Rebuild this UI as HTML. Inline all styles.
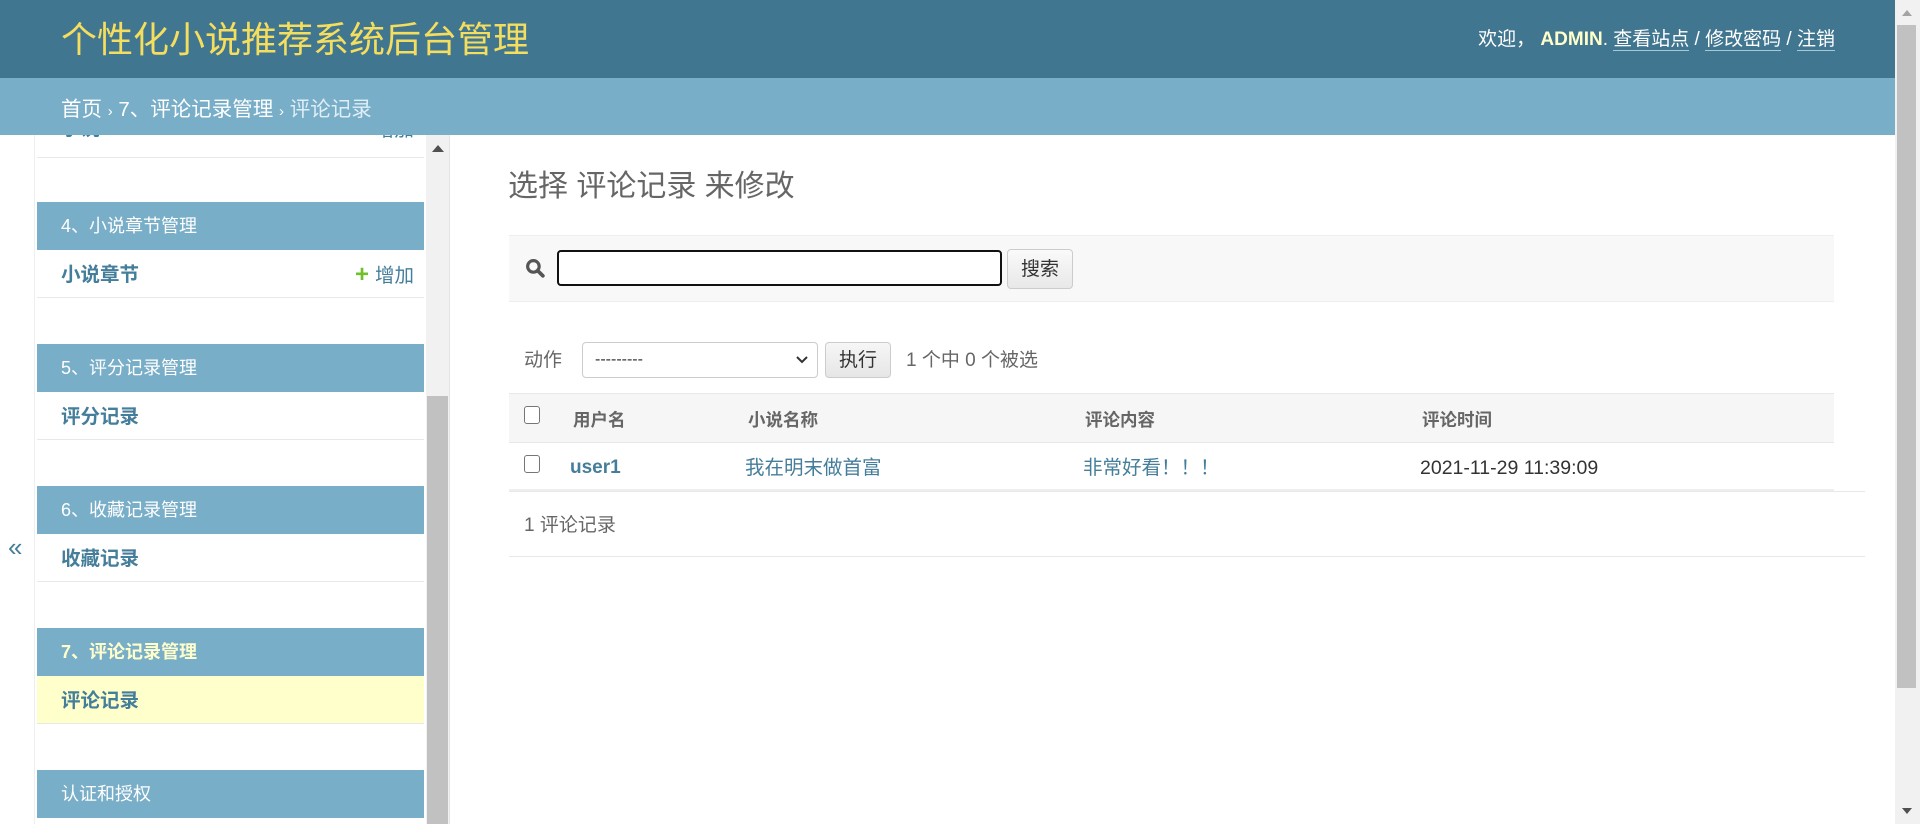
<!DOCTYPE html>
<html><head><meta charset="utf-8"><style>
*{box-sizing:border-box;margin:0;padding:0}
body{width:1920px;height:824px;overflow:hidden;background:#fff;font-family:"Liberation Sans","Noto Sans CJK SC",sans-serif;color:#333;position:relative}
.a{position:absolute;white-space:nowrap}
.t{position:absolute;white-space:nowrap;height:30px;line-height:30px}
.cap{position:absolute;left:37px;width:387px;height:48px;background:#79aec8;color:#fff;font-size:18px;line-height:48px;padding-left:24px}
.row{position:absolute;left:37px;width:387px;height:48px;border-bottom:1px solid #e8e8e8;font-size:19.5px;font-weight:bold;color:#447e9b;line-height:50px;padding-left:24px}
.add{position:absolute;right:10px;top:0;font-weight:normal;color:#447e9b}
.add b{color:#70bf2b;font-size:24px;margin-right:6px}
.cb{position:absolute;width:16px;height:18px;border:1px solid #767676;border-radius:3px;background:#fff}
</style></head><body>
<div class="a" style="left:0;top:0;width:1895px;height:78px;background:#417690"></div>
<div class="t" style="left:61px;top:20px;height:40px;line-height:40px;font-size:36px;color:#f5dd5d">个性化小说推荐系统后台管理</div>
<div class="t" style="right:85px;top:25px;font-size:19px;color:#fff">欢迎， <b style="color:#ffc">ADMIN</b>. <span style="border-bottom:1px solid #aac5d3">查看站点</span> / <span style="border-bottom:1px solid #aac5d3">修改密码</span> / <span style="border-bottom:1px solid #aac5d3">注销</span></div>

<div class="a" style="left:0;top:135px;width:35px;height:689px;border-right:1px solid #eee"></div>
<div class="a" style="left:8px;top:532px;font-size:26px;color:#447e9b">«</div>

<div class="row" style="top:110px;height:48px;line-height:38px">小说<span class="add"><b>+</b>增加</span></div>
<div class="cap" style="top:202px">4、小说章节管理</div>
<div class="row" style="top:250px">小说章节<span class="add"><b>+</b>增加</span></div>
<div class="cap" style="top:344px">5、评分记录管理</div>
<div class="row" style="top:392px">评分记录</div>
<div class="cap" style="top:486px">6、收藏记录管理</div>
<div class="row" style="top:534px">收藏记录</div>
<div class="cap" style="top:628px;color:#ffc;font-weight:bold">7、评论记录管理</div>
<div class="row" style="top:676px;background:#ffc">评论记录</div>
<div class="cap" style="top:770px">认证和授权</div>
<div class="a" style="left:0;top:78px;width:1895px;height:57px;background:#79aec8"></div>
<div class="t" style="left:61px;top:95px;font-size:20.5px;color:#fff">首页 <span style="font-size:15px">›</span> 7、评论记录管理 <span style="font-size:15px">›</span> <span style="color:#e0eef5">评论记录</span></div>
<div class="a" style="left:426px;top:135px;width:24px;height:689px;background:#f1f1f1;border-right:1px solid #e4e4e4"></div>
<div class="a" style="left:427px;top:396px;width:21px;height:428px;background:#c1c1c1"></div>
<div class="a" style="left:432px;top:145px;width:0;height:0;border-left:6px solid transparent;border-right:6px solid transparent;border-bottom:7px solid #505050"></div>

<div class="t" style="left:508px;top:169px;height:36px;line-height:36px;font-size:30px;color:#666">选择 评论记录 来修改</div>
<div class="a" style="left:509px;top:235px;width:1325px;height:67px;background:#f8f8f8;border-top:1px solid #eee;border-bottom:1px solid #eee"></div>
<svg class="a" style="left:525px;top:258px" width="21" height="21" viewBox="0 0 20 20"><circle cx="8" cy="8" r="5.5" fill="none" stroke="#555" stroke-width="3"/><path d="M12 12l5 5" stroke="#555" stroke-width="3.5" stroke-linecap="round"/></svg>
<div class="a" style="left:557px;top:250px;width:445px;height:36px;border:2px solid #111;border-radius:4px;background:#fff"></div>
<div class="a" style="left:1007px;top:249px;width:66px;height:40px;border:1px solid #ccc;border-radius:4px;background:linear-gradient(#fafafa,#e8e8e8);font-size:19px;line-height:40px;text-align:center;color:#333">搜索</div>

<div class="t" style="left:524px;top:346px;font-size:19px;color:#666">动作</div>
<div class="a" style="left:582px;top:342px;width:236px;height:36px;border:1px solid #ccc;border-radius:4px;background:#fff;font-size:16px;line-height:34px;padding-left:12px;color:#333">---------<svg style="position:absolute;right:8px;top:12px" width="14" height="10" viewBox="0 0 14 10"><path d="M2 2l5 5 5-5" fill="none" stroke="#333" stroke-width="2"/></svg></div>
<div class="a" style="left:825px;top:342px;width:66px;height:36px;border:1px solid #ccc;border-radius:4px;background:linear-gradient(#f6f6f6,#e6e6e6);font-size:19px;line-height:36px;text-align:center">执行</div>
<div class="t" style="left:906px;top:346px;font-size:19px;color:#666">1 个中 0 个被选</div>

<div class="a" style="left:509px;top:393px;width:1325px;height:50px;background:#f6f6f6;border-top:1px solid #e8e8e8;border-bottom:1px solid #e8e8e8"></div>
<div class="cb" style="left:524px;top:406px"></div>
<div class="t" style="left:573px;top:405px;font-size:17.5px;font-weight:bold;color:#666">用户名</div>
<div class="t" style="left:748px;top:405px;font-size:17.5px;font-weight:bold;color:#666">小说名称</div>
<div class="t" style="left:1085px;top:405px;font-size:17.5px;font-weight:bold;color:#666">评论内容</div>
<div class="t" style="left:1422px;top:405px;font-size:17.5px;font-weight:bold;color:#666">评论时间</div>
<div class="cb" style="left:524px;top:455px"></div>
<div class="t" style="left:570px;top:453px;font-size:19px;font-weight:bold;color:#447e9b">user1</div>
<div class="t" style="left:745px;top:453px;font-size:19.5px;color:#447e9b">我在明末做首富</div>
<div class="t" style="left:1083px;top:453px;font-size:19.5px;color:#447e9b">非常好看！！！</div>
<div class="t" style="left:1420px;top:453px;font-size:19.5px;color:#333">2021-11-29 11:39:09</div>
<div class="a" style="left:509px;top:491px;width:1356px;height:1px;background:#e8e8e8"></div>
<div class="a" style="left:509px;top:489px;width:1325px;height:2px;background:#eee"></div>
<div class="t" style="left:524px;top:511px;font-size:19px;color:#666">1 评论记录</div>
<div class="a" style="left:509px;top:556px;width:1356px;height:1px;background:#e8e8e8"></div>

<div class="a" style="left:1895px;top:0;width:25px;height:824px;background:#f1f1f1"></div>
<div class="a" style="left:1897px;top:25px;width:19px;height:663px;background:#c1c1c1"></div>
<div class="a" style="left:1902px;top:10px;width:0;height:0;border-left:5px solid transparent;border-right:5px solid transparent;border-bottom:6px solid #a3a3a3"></div>
<div class="a" style="left:1902px;top:808px;width:0;height:0;border-left:5px solid transparent;border-right:5px solid transparent;border-top:6px solid #505050"></div>
</body></html>
